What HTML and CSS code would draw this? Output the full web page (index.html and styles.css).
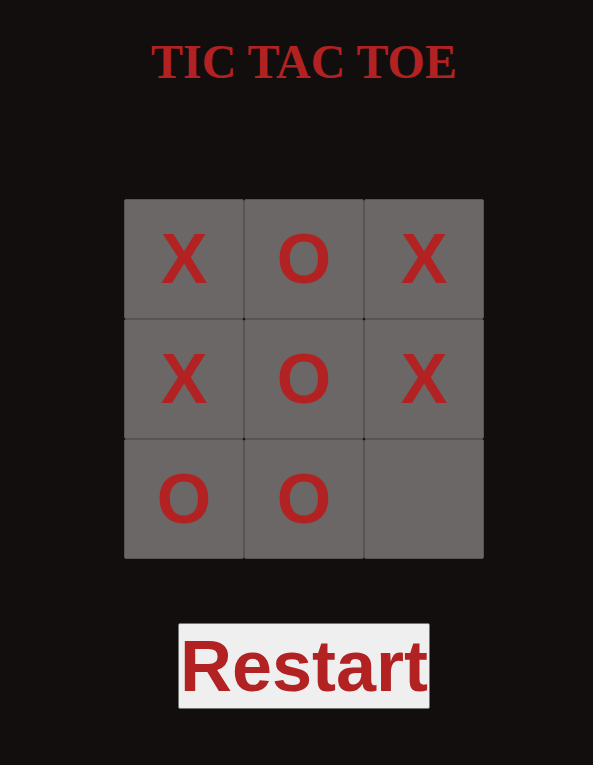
FILE: index.html
```html
<!DOCTYPE html>
<html>
<head>
  <title>Tic Tac Toe</title>
  <link rel="stylesheet" href="styles.css">
</head>
<body>
  <h1 class="title">TIC TAC TOE</h1>
  <div class="board" id="board"></div>
  <button class="restart" id="restart">Restart</button>
  <script>
    const board = document.getElementById("board");
    const start = ["X", "O", "X", "X", "O", "X", "O", "O", ""];
    let cells = start.slice();
    let turn = "X";

    function render() {
      board.innerHTML = cells.map((c, i) =>
        `<button class="cell" data-i="${i}">${c}</button>`
      ).join("");
    }

    board.addEventListener("click", e => {
      const i = e.target.dataset.i;
      if (i === undefined || cells[i]) return;
      cells[i] = turn;
      turn = turn === "X" ? "O" : "X";
      render();
    });

    document.getElementById("restart").onclick = () => {
      cells = Array(9).fill("");
      turn = "X";
      render();
    };

    render();
  </script>
</body>
</html>
```

FILE: styles.css
```css
body { margin: 0; padding-left: 15px; background: #130e0e; display: flex; flex-direction: column; align-items: center; }
.title { font-family: "Liberation Serif", serif; font-size: 48px; font-weight: bold; color: #b22222; margin: 34px 0 0; line-height: 55px; }
.board { display: grid; grid-template-columns: repeat(3, 120px); grid-auto-rows: 120px; margin-top: 110px; }
.cell { background: #6b6766; border: 1px solid #555; border-radius: 2px; color: #b22222; font-family: "Liberation Sans", Arial, sans-serif; font-weight: bold; font-size: 70px; padding: 0; cursor: pointer; }
.restart { margin-top: 64px; font-family: "Liberation Sans", Arial, sans-serif; font-weight: bold; font-size: 72px; line-height: 82px; color: #b22222; background: #efefef; border: 1px solid #767676; border-radius: 2px; padding: 1px 1px; cursor: pointer; }
```
